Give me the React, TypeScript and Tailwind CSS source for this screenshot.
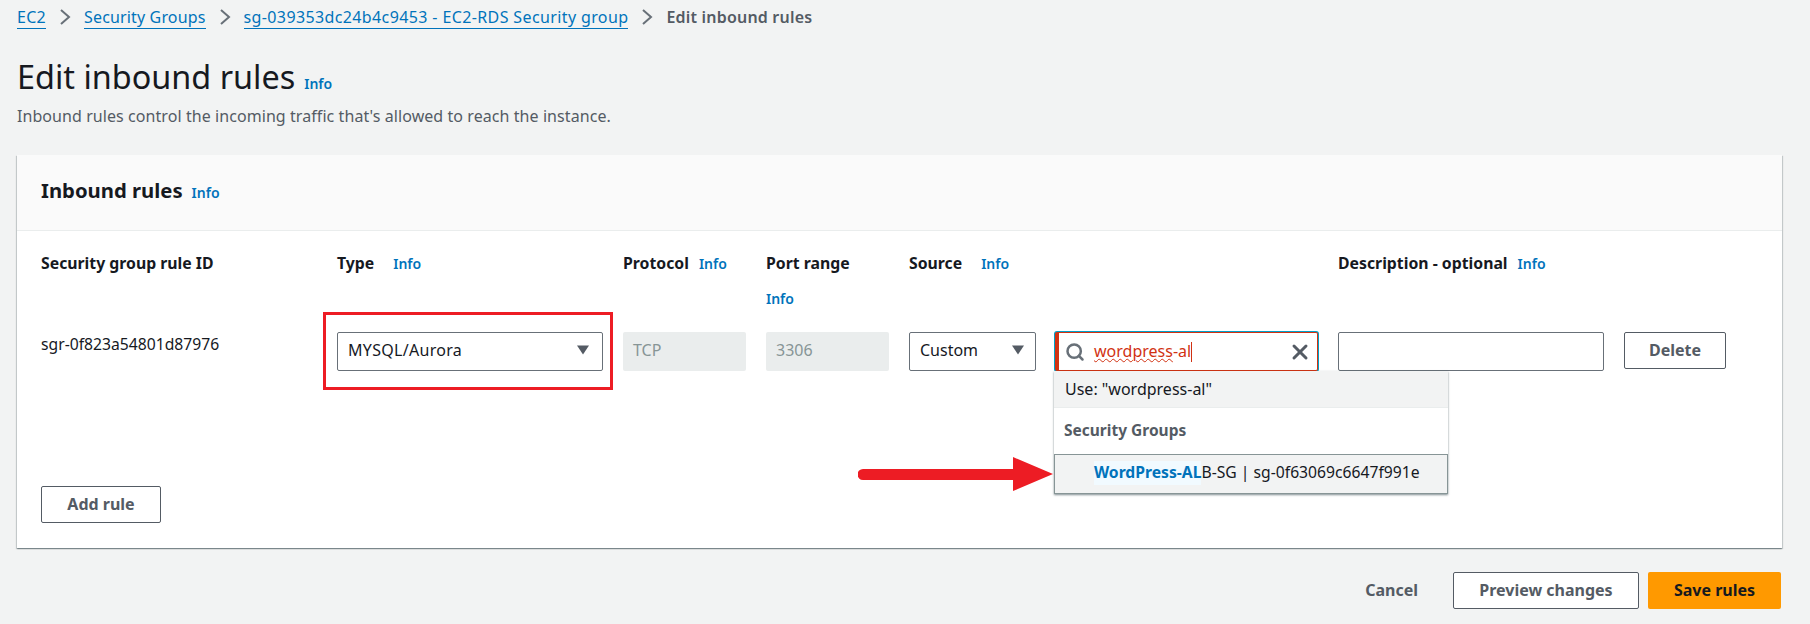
import { Search, X } from "lucide-react";

const Info = ({ className = "" }: { className?: string }) => (
  <a className={`text-[14px] font-semibold text-[#0073bb] ${className}`}>Info</a>
);

const Caret = () => (
  <svg width="14" height="10" viewBox="0 0 14 10" className="shrink-0">
    <path d="M1 0.5h12L7 9.5z" fill="#545b64" />
  </svg>
);

const Chevron = () => (
  <svg width="12" height="18" viewBox="0 0 12 18" className="mx-[13px] shrink-0" fill="none">
    <path d="M2 2l8 7-8 7" stroke="#687078" strokeWidth="2" />
  </svg>
);

const Crumb = ({ children, className = "" }: { children: string; className?: string }) => (
  <>
    <a className={`text-[#0073bb] border-b border-[#0073bb] leading-[22px] ${className}`}>{children}</a>
    <Chevron />
  </>
);

const Head = ({ children }: { children: string }) => (
  <span className="font-bold text-[15.8px] text-[#16191f]">{children}</span>
);

export default function App() {
  return (
    <div
      className="relative h-[624px] w-[1810px] overflow-hidden bg-[#f2f3f3] pl-[17px] pr-[28px] pt-[6px] text-[16px] text-[#16191f]"
      style={{ fontFamily: '"Noto Sans", sans-serif' }}
    >
      {/* breadcrumbs */}
      <div className="flex items-center h-[22px]">
        <Crumb className="tracking-[0.3px]">EC2</Crumb>
        <Crumb className="tracking-[0.15px]">Security Groups</Crumb>
        <Crumb className="tracking-[0.38px]">sg-039353dc24b4c9453 - EC2-RDS Security group</Crumb>
        <span className="font-semibold tracking-[0.2px] text-[#545b64]">Edit inbound rules</span>
      </div>

      {/* title */}
      <div className="flex items-baseline gap-[9px] mt-[29px] h-[38px]">
        <h1 className="text-[32.4px] leading-[38px] font-normal">Edit inbound rules</h1>
        <Info />
      </div>
      <p className="mt-[10px] leading-[22px] tracking-[0.07px] text-[#545b64]">
        Inbound rules control the incoming traffic that's allowed to reach the instance.
      </p>

      {/* panel */}
      <div className="relative mt-[28px] h-[393px] bg-white shadow-[0_1px_1px_0_rgba(0,28,36,0.3),1px_1px_1px_0_rgba(0,28,36,0.15),-1px_1px_1px_0_rgba(0,28,36,0.15)]">
        <div className="flex items-baseline gap-[9px] h-[76px] pl-[24px] pt-[22px] bg-[#fafafa] border-b border-[#eaeded]">
          <h2 className="text-[20.3px] leading-[26px] font-bold">Inbound rules</h2>
          <Info />
        </div>

        <div className="pl-[24px]">
          <div className="grid grid-cols-[276px_266px_123px_123px_126px_263px_266px_102px] gap-x-[20px] mt-[21px] h-[80px] leading-[22px]">
            <div><Head>Security group rule ID</Head></div>
            <div className="flex gap-[19px] items-baseline"><Head>Type</Head><Info /></div>
            <div className="flex gap-[10px] items-baseline"><Head>Protocol</Head><Info /></div>
            <div className="flex flex-col">
              <Head>Port range</Head>
              <Info className="mt-[14px]" />
            </div>
            <div className="flex gap-[19px] items-baseline col-span-2"><Head>Source</Head><Info /></div>
            <div className="flex gap-[10px] items-baseline"><Head>Description - optional</Head><Info /></div>
            <div />
          </div>

          <div className="grid grid-cols-[276px_266px_123px_123px_126px_263px_266px_102px] gap-x-[20px] items-start">
            <div className="mt-[1px] leading-[22px] text-[15.7px]">sgr-0f823a54801d87976</div>
            <div className="flex items-center justify-between h-[39px] pl-[10px] pr-[12px] pb-[3px] bg-white border border-[#687078] rounded-[2px]">
              <span className="tracking-[0.3px]">MYSQL/Aurora</span>
              <Caret />
            </div>
            <div className="flex items-center h-[39px] px-[10px] pb-[3px] bg-[#eaeded] rounded-[2px] text-[#879596]">TCP</div>
            <div className="flex items-center h-[39px] px-[10px] pb-[3px] bg-[#eaeded] rounded-[2px] text-[#879596]">3306</div>
            <div className="flex items-center justify-between w-[127px] h-[39px] px-[10px] pb-[3px] bg-white border border-[#687078] rounded-[2px]">
              Custom
              <Caret />
            </div>
            <div className="flex items-center h-[39px] pl-[6px] pr-[5px] bg-white border border-[#d13212] border-l-[4px] rounded-[2px] shadow-[0_0_0_1px_#00a1c9]">
              <Search className="w-[20px] h-[20px] text-[#687078] shrink-0" strokeWidth={3} />
              <span className="ml-[9px] pb-[1px] text-[#d13212]">
                <span className="underline decoration-wavy decoration-[#d13212] decoration-1">wordpress</span>-al
              </span>
              <span className="w-px h-[20px] bg-[#d13212]" />
              <X className="w-[24px] h-[24px] ml-auto text-[#545b64]" strokeWidth={3} />
            </div>
            <div className="h-[39px] bg-white border border-[#687078] rounded-[2px]" />
            <button className="h-[37px] pb-[2px] bg-white border border-[#545b64] rounded-[2px] font-bold text-[#545b64]">Delete</button>
          </div>

          <button className="mt-[115px] block w-[120px] h-[37px] pb-[2px] bg-white border border-[#545b64] rounded-[2px] font-bold text-[#545b64]">
            Add rule
          </button>
        </div>

        {/* suggestion dropdown */}
        <div className="absolute left-[1037px] top-[216px] w-[394px] bg-white shadow-[0_1px_2px_0_rgba(0,28,36,0.5)] z-10">
          <div className="flex items-center h-[37px] pl-[11px] bg-[#f2f3f3] border-b border-[#eaeded]">Use: "wordpress-al"</div>
          <div className="flex items-center h-[46px] pl-[10px] font-bold text-[15.5px] text-[#545b64]">Security Groups</div>
          <div className="flex items-center h-[40px] pl-[39px] pb-[2px] bg-[#f2f3f3] border border-[#879596] whitespace-nowrap text-[15.7px]">
            <span className="bg-[#f1faff] font-bold text-[#0073bb]">WordPress-AL</span>
            <span>B-SG | sg-0f63069c6647f991e</span>
          </div>
        </div>

        {/* annotations */}
        <div className="absolute left-[306px] top-[157px] w-[290px] h-[78px] border-[3px] border-[#ed1c24] z-10" />
        <svg className="absolute left-[841px] top-[301px] z-20" width="196" height="36" viewBox="0 0 196 36">
          <path d="M5 13h150V1l40 17-40 17V24H5a5.5 5.5 0 0 1 0-11z" fill="#ed1c24" />
        </svg>
      </div>

      {/* footer actions */}
      <div className="flex items-center justify-end mt-[24px] mr-[1px] h-[37px] font-bold">
        <span className="text-[#545b64] mr-[35px] pb-[2px]">Cancel</span>
        <button className="w-[186px] h-[37px] pb-[2px] bg-white border border-[#545b64] rounded-[2px] text-[#545b64]">Preview changes</button>
        <button className="ml-[9px] w-[133px] h-[37px] pb-[2px] bg-[#ff9900] rounded-[2px] text-[#16191f]">Save rules</button>
      </div>
    </div>
  );
}
